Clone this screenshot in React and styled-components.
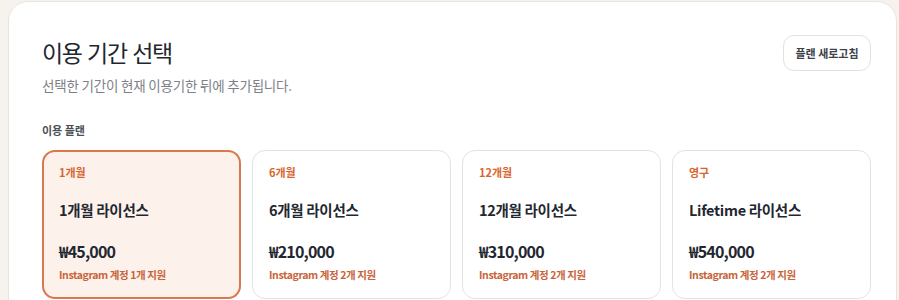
import styled, { createGlobalStyle } from "styled-components";

const GlobalStyle = createGlobalStyle`
  html, body {
    margin: 0;
    padding: 0;
    background: #f6f3ee;
    font-family: "Noto Sans CJK KR", "Noto Sans", sans-serif;
  }
  * { box-sizing: border-box; }
`;

const plans = [
  { tag: "1개월", name: "1개월 라이선스", price: "₩45,000", note: "Instagram 계정 1개 지원" },
  { tag: "6개월", name: "6개월 라이선스", price: "₩210,000", note: "Instagram 계정 2개 지원" },
  { tag: "12개월", name: "12개월 라이선스", price: "₩310,000", note: "Instagram 계정 2개 지원" },
  { tag: "영구", name: "Lifetime 라이선스", price: "₩540,000", note: "Instagram 계정 2개 지원" },
];

const App = () => {
  return (
    <Page>
      <GlobalStyle />
      <Panel>
        <Header>
          <div>
            <Title>이용 기간 선택</Title>
            <Subtitle>선택한 기간이 현재 이용기한 뒤에 추가됩니다.</Subtitle>
          </div>
          <RefreshButton>플랜 새로고침</RefreshButton>
        </Header>
        <SectionLabel>이용 플랜</SectionLabel>
        <Grid>
          {plans.map((p, i) => (
            <Card key={p.tag} $active={i === 0}>
              <Tag>{p.tag}</Tag>
              <PlanName>{p.name}</PlanName>
              <Price>{p.price}</Price>
              <Note>{p.note}</Note>
            </Card>
          ))}
        </Grid>
      </Panel>
    </Page>
  );
};

const Page = styled.div`
  padding: 1px 2px 0 8px;
  height: 300px;
  overflow: hidden;
`;

const Panel = styled.section`
  background: #ffffff;
  border: 1px solid #e9e5de;
  border-radius: 20px;
  padding: 32px 25px 0 33px;
  height: 320px;
`;

const Header = styled.div`
  display: flex;
  justify-content: space-between;
  align-items: flex-start;
`;

const Title = styled.h1`
  margin: 0;
  font-size: 23px;
  line-height: 36px;
  font-weight: 400;
  color: #1f2731;
  letter-spacing: -1.3px;
  word-spacing: 1.5px;
`;

const Subtitle = styled.p`
  margin: 5px 0 0;
  font-size: 13.5px;
  line-height: 20px;
  color: #7d8187;
  letter-spacing: -0.2px;
`;

const RefreshButton = styled.button`
  margin-top: 1px;
  width: 88px;
  height: 36px;
  border: 1px solid #e2e2e2;
  border-radius: 11px;
  background: #ffffff;
  font-family: inherit;
  font-size: 11px;
  font-weight: 700;
  color: #3d4249;
  cursor: pointer;
`;

const SectionLabel = styled.div`
  margin-top: 27px;
  font-size: 11px;
  line-height: 16px;
  font-weight: 700;
  color: #4a4f56;
`;

const Grid = styled.div`
  margin-top: 12px;
  display: grid;
  grid-template-columns: repeat(4, 1fr);
  gap: 11px;
`;

const Card = styled.div`
  display: flex;
  flex-direction: column;
  height: 149px;
  border-radius: 13px;
  border: ${(p) => (p.$active ? "2px solid #d9784c" : "1px solid #e3e3e5")};
  background: ${(p) => (p.$active ? "#fdf2eb" : "#ffffff")};
  padding: ${(p) => (p.$active ? "12px 15px 0" : "13px 16px 0")};
`;

const Tag = styled.div`
  font-size: 11px;
  line-height: 16px;
  font-weight: 700;
  color: #d8652f;
`;

const PlanName = styled.div`
  margin-top: 19px;
  font-size: 14.5px;
  line-height: 22px;
  font-weight: 600;
  color: #1f2731;
  letter-spacing: -0.3px;
`;

const Price = styled.div`
  margin-top: 18px;
  font-size: 16px;
  line-height: 24px;
  font-weight: 700;
  color: #1f2731;
  letter-spacing: -0.8px;
`;

const Note = styled.div`
  margin-top: 4px;
  font-size: 10.5px;
  line-height: 16px;
  font-weight: 700;
  color: #c8643a;
  letter-spacing: -0.4px;
`;

export default App;
